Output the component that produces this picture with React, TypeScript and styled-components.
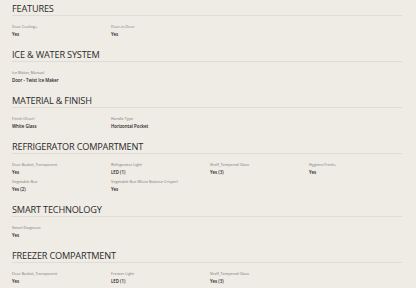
import React from "react";
import styled, { createGlobalStyle } from "styled-components";

const Global = createGlobalStyle`
  html, body { margin: 0; padding: 0; background: #efebe5; }
  body { font-family: "Open Sans", "Noto Sans", sans-serif; -webkit-font-smoothing: antialiased; }
`;

const Page = styled.div`
  padding: 0 14px 0 12px;
  background: #efebe5;
  min-height: 288px;
`;

const Section = styled.section`
  padding-bottom: 8px;
`;

const Heading = styled.h2`
  margin: 0;
  height: 16px;
  box-sizing: border-box;
  padding-top: 2px;
  font-size: 9.2px;
  line-height: 13px;
  font-weight: 400;
  color: #2b2b2b;
  letter-spacing: -0.2px;
  border-bottom: 1px solid #e0dbd4;
`;

const Grid = styled.div`
  display: grid;
  grid-template-columns: repeat(4, 93px);
  column-gap: 6px;
  row-gap: 1.5px;
  padding-top: 7px;
`;

const Item = styled.div`
  display: flex;
  flex-direction: column;
  gap: 1px;
`;

const Label = styled.div`
  font-size: 3.8px;
  line-height: 7px;
  color: #7a7a7a;
  white-space: nowrap;
`;

const Value = styled.div`
  font-size: 4.35px;
  line-height: 7px;
  font-weight: 600;
  color: #222;
  white-space: nowrap;
`;

type Spec = [string, string];

const sections: { title: string; items: Spec[] }[] = [
  { title: "FEATURES", items: [["Door Cooling+", "Yes"], ["Door-in-Door", "Yes"]] },
  { title: "ICE & WATER SYSTEM", items: [["Ice Maker_Manual", "Door - Twist Ice Maker"]] },
  { title: "MATERIAL & FINISH", items: [["Finish (Door)", "White Glass"], ["Handle Type", "Horizontal Pocket"]] },
  {
    title: "REFRIGERATOR COMPARTMENT",
    items: [
      ["Door Basket_Transparent", "Yes"],
      ["Refrigerator Light", "LED (1)"],
      ["Shelf_Tempered Glass", "Yes (3)"],
      ["Hygiene Fresh+", "Yes"],
      ["Vegetable Box", "Yes (2)"],
      ["Vegetable Box (Moist Balance Crisper)", "Yes"],
    ],
  },
  { title: "SMART TECHNOLOGY", items: [["Smart Diagnosis", "Yes"]] },
  {
    title: "FREEZER COMPARTMENT",
    items: [
      ["Door Basket_Transparent", "Yes"],
      ["Freezer Light", "LED (1)"],
      ["Shelf_Tempered Glass", "Yes (3)"],
    ],
  },
];

export default function App() {
  return (
    <>
      <Global />
      <Page>
        {sections.map((s) => (
          <Section key={s.title}>
            <Heading>{s.title}</Heading>
            <Grid>
              {s.items.map(([l, v], i) => (
                <Item key={i}>
                  <Label>{l}</Label>
                  <Value>{v}</Value>
                </Item>
              ))}
            </Grid>
          </Section>
        ))}
      </Page>
    </>
  );
}
